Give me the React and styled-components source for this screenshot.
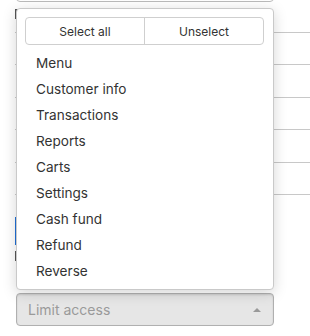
import React from 'react';
import styled, {createGlobalStyle} from "styled-components";

const GlobalStyle = createGlobalStyle`
    body {
        margin: 0;
        background: #fff;
        font-family: Inter, "Liberation Sans", sans-serif;
    }
`;

const items = ["Menu", "Customer info", "Transactions", "Reports", "Carts", "Settings", "Cash fund", "Refund", "Reverse"];

const rows = [
    {mark: "#555"},
    {mark: null},
    {mark: null},
    {mark: null},
    {mark: null},
    {mark: null},
];

const App = () => {
    return (
        <Page>
            <GlobalStyle />
            <TopSelect />
            <Rows>
                {rows.map((r, i) => (
                    <Row key={i}>
                        <Mark color={r.mark} />
                    </Row>
                ))}
            </Rows>
            <Extras>
                <Mark color="#1f6fd6" tall />
                <Mark color="#555" />
            </Extras>
            <SelectWrap>
                <Menu>
                    <ButtonGroup>
                        <GroupButton>Select all</GroupButton>
                        <GroupButton>Unselect</GroupButton>
                    </ButtonGroup>
                    <List>
                        {items.map(item => (
                            <Item key={item}>{item}</Item>
                        ))}
                    </List>
                </Menu>
                <Select>
                    <Placeholder>Limit access</Placeholder>
                    <Arrow />
                </Select>
            </SelectWrap>
        </Page>
    );
};

export default App;

const Page = styled.div`
    width: 310px;
    height: 336px;
    overflow: hidden;
    position: relative;
    display: flex;
    flex-direction: column;
`;

const TopSelect = styled.div`
    margin: -32px 36px 0 16px;
    height: 32px;
    border: 1px solid #bbb;
    border-radius: 4px;
    flex-shrink: 0;
`;

const Rows = styled.div`
    display: flex;
    flex-direction: column;
    margin-top: -2px;
    padding-left: 15px;
`;

const Row = styled.div`
    height: 32px;
    border-bottom: 1px solid #c8c8c8;
    display: flex;
    align-items: center;
    &:nth-child(even) {
        height: 31px;
    }
`;

const Mark = styled.span`
    width: 6px;
    height: ${p => p.tall ? "28px" : "10px"};
    background: ${p => p.color || "transparent"};
    margin-top: ${p => p.tall ? "0" : "-4px"};
`;

const Extras = styled.div`
    display: flex;
    flex-direction: column;
    gap: 10px;
    padding: 22px 0 0 15px;
`;

const SelectWrap = styled.div`
    position: absolute;
    left: 16px;
    top: 293px;
    width: 258px;
`;

const Menu = styled.div`
    position: absolute;
    left: 0;
    right: 0;
    bottom: calc(100% + 3px);
    height: 282px;
    box-sizing: border-box;
    background: #fff;
    border: 1px solid #c9c9c9;
    border-radius: 4px;
    box-shadow: 0 3px 14px rgba(0, 0, 0, 0.17);
    padding: 8px 8px 6px 8px;
    display: flex;
    flex-direction: column;
`;

const ButtonGroup = styled.div`
    display: flex;
    height: 30px;
    border: 1px solid #cfcfcf;
    border-radius: 4px;
    box-sizing: border-box;
    margin: 0 1px 0 0;
`;

const GroupButton = styled.div`
    flex: 1;
    display: flex;
    align-items: center;
    justify-content: center;
    font-size: 12px;
    color: #333;
    &:first-child {
        border-right: 1px solid #cfcfcf;
    }
`;

const List = styled.div`
    display: flex;
    flex-direction: column;
    margin-top: 4px;
`;

const Item = styled.div`
    height: 26px;
    line-height: 28px;
    padding-left: 11px;
    font-size: 13.6px;
    color: #333;
`;

const Select = styled.div`
    height: 33px;
    box-sizing: border-box;
    background: #e6e6e6;
    border: 1px solid #b0b0b0;
    border-radius: 4px;
    box-shadow: inset 0 1px 2px rgba(0, 0, 0, 0.12);
    display: flex;
    align-items: center;
    justify-content: space-between;
    padding: 0 11px 0 11px;
`;

const Placeholder = styled.span`
    font-size: 14px;
    color: #9a9a9a;
`;

const Arrow = styled.span`
    width: 0;
    height: 0;
    border-left: 4px solid transparent;
    border-right: 4px solid transparent;
    border-bottom: 4px solid #999;
    margin-right: 1px;
`;
